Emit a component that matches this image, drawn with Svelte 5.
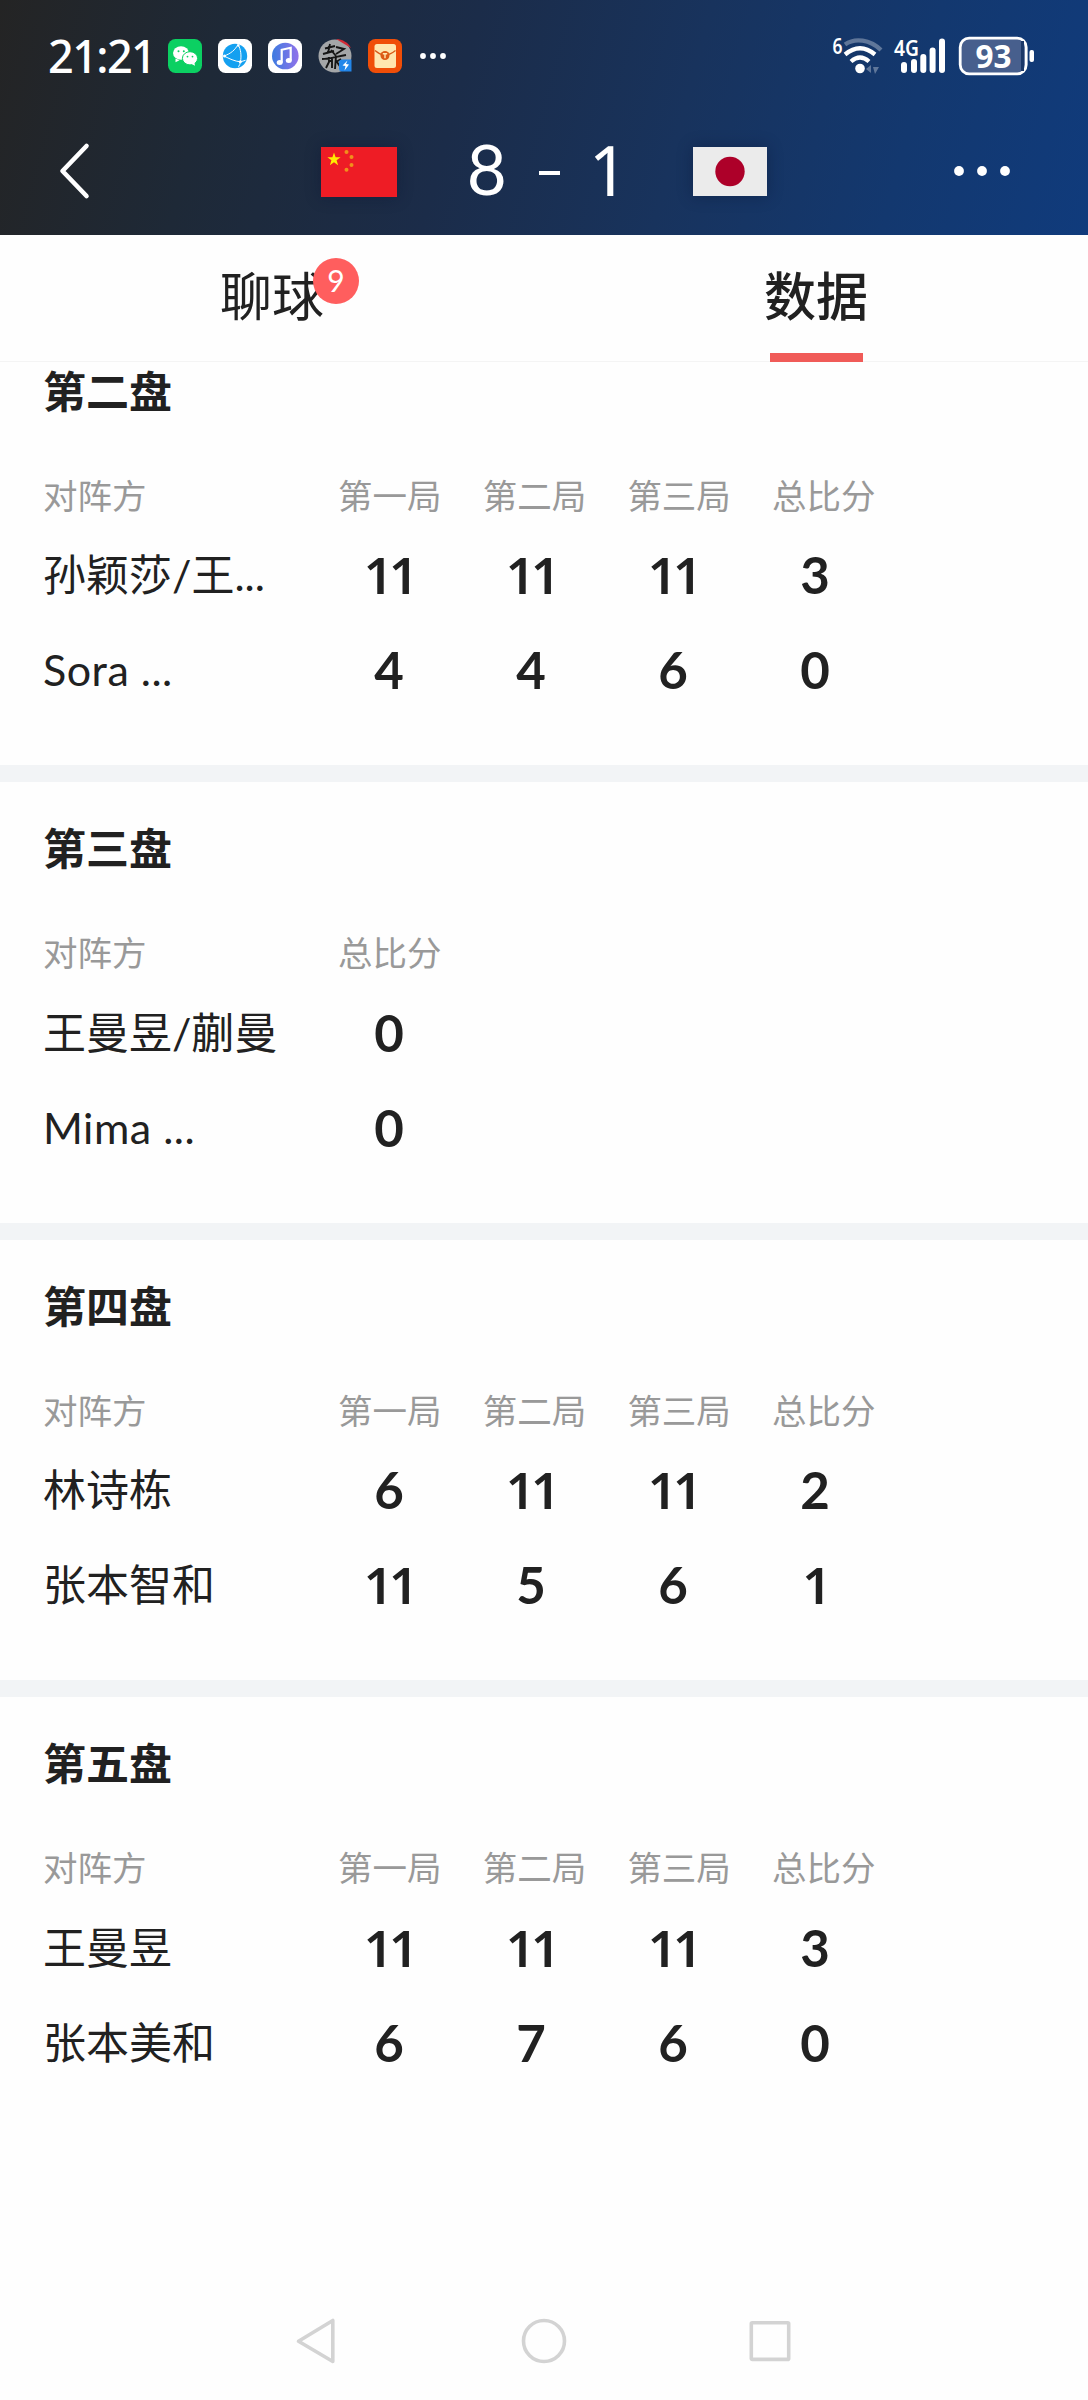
<script>
  const games = ['第一局', '第二局', '第三局', '总比分'];
  const matches = [
    { title: '第二盘', heads: games, rows: [
      { name: '孙颖莎/王...', scores: [11, 11, 11, 3] },
      { name: 'Sora ...', scores: [4, 4, 6, 0] } ] },
    { title: '第三盘', heads: ['总比分'], rows: [
      { name: '王曼昱/蒯曼', scores: [0] },
      { name: 'Mima ...', scores: [0] } ] },
    { title: '第四盘', heads: games, rows: [
      { name: '林诗栋', scores: [6, 11, 11, 2] },
      { name: '张本智和', scores: [11, 5, 6, 1] } ] },
    { title: '第五盘', heads: games, rows: [
      { name: '王曼昱', scores: [11, 11, 11, 3] },
      { name: '张本美和', scores: [6, 7, 6, 0] } ] }
  ];
  const isOnes = (n) => /^1+$/.test(String(n));
  const isLatin = (s) => /^[A-Za-z]/.test(s);
</script>

<div class="screen">
  <header>
    <div class="status">
      <span class="time">21:21</span>
      <div class="apps">
        <svg width="34" height="34" viewBox="0 0 34 34">
          <rect width="34" height="34" rx="7.5" fill="#0bd062" />
          <path d="M7.5 19.500 7.500 23.300l4-2z" fill="#fff" />
          <ellipse cx="13" cy="14" rx="8" ry="6.800" fill="#fff" />
          <ellipse cx="22" cy="19.300" rx="7.600" ry="6.600" fill="#fff" stroke="#0bd062" stroke-width="1" />
          <path d="m23.500 25 3.500 1.700-.6-3.500z" fill="#fff" />
          <g fill="#0bd062"><circle cx="10.500" cy="12.300" r="1" /><circle cx="15.800" cy="12.300" r="1" /><circle cx="19.500" cy="17.600" r=".9" /><circle cx="24.500" cy="17.600" r=".9" /></g>
        </svg>
        <svg width="34" height="34" viewBox="0 0 34 34">
          <rect width="34" height="34" rx="7.500" fill="#fff" />
          <circle cx="17" cy="17" r="12.200" fill="#14a0f0" />
          <path d="M6 17C13 14.500 17 11 20 5.500M6 17c5 2.500 11 5.500 16.500 5.800M20 5.500c3 5 3.500 11 2.500 17.300-.3 2-1 3.500-2 5M22.500 22.800l5-1.500" fill="none" stroke="#fff" stroke-width="1" />
          <circle cx="6.500" cy="17" r="1.500" fill="#fff" /><circle cx="22.300" cy="22.800" r="1.500" fill="#fff" /><circle cx="20.300" cy="6.500" r="1.200" fill="#fff" />
        </svg>
        <svg width="34" height="34" viewBox="0 0 34 34">
          <defs><linearGradient id="music" x1="0" y1="0" x2="1" y2="0"><stop offset="0" stop-color="#3d7be0" /><stop offset="1" stop-color="#9072ea" /></linearGradient></defs>
          <rect width="34" height="34" rx="7.500" fill="#fff" />
          <circle cx="17.300" cy="17" r="13.300" fill="url(#music)" />
          <path d="M13.700 23.500V10.800l9-2v12.700" fill="none" stroke="#fff" stroke-width="2.200" />
          <ellipse cx="11.700" cy="23.500" rx="3" ry="2.500" fill="#fff" /><ellipse cx="20.800" cy="21.500" rx="3" ry="2.500" fill="#fff" />
        </svg>
        <svg width="34" height="34" viewBox="0 0 34 34">
          <circle cx="17" cy="17" r="16.500" fill="#a4a6a8" />
          <path d="M18 0c7 .5 12 3.500 15 9z" fill="#d42a35" />
          <path d="M7 9.500 17 7M12 5l-2 9M5 15l11-3M18 8l8 2-8 5M4 20c8 0 16-3 24-4M11 18v5l-3 6M14 18v11M11 22h3M18 17l-1 13M18 23l5-3M19 23l4 6M13 11l5 6" fill="none" stroke="#151515" stroke-width="1.900" />
          <path d="M21 23.500q0-3 3-3h9.500v12H24q-3 0-3-3z" fill="#2286ea" />
          <path d="m29.500 21.500-5 5 3 .5-1 4.500 4.500-6-3-.5z" fill="#fff" />
        </svg>
        <svg width="34" height="34" viewBox="0 0 34 34">
          <rect width="34" height="34" rx="7.500" fill="#f04e08" />
          <rect x="6.500" y="5" width="21.500" height="24" rx="2.500" fill="#ffe7b0" />
          <path d="M7 11.500c4 3.500 6 4.500 10 5 4-.5 6-1.500 10.500-5" fill="none" stroke="#d85a18" stroke-width="1.300" />
          <circle cx="17" cy="16.500" r="4.500" fill="#dc5a16" />
          <path d="M14.800 14.700h4.400M17 14.700v4.500" stroke="#ffe7b0" stroke-width="1.400" />
        </svg>
        <svg class="more" width="28" height="34" viewBox="0 0 28 34" fill="#fff"><circle cx="4" cy="17" r="2.900" /><circle cx="14" cy="17" r="2.900" /><circle cx="24" cy="17" r="2.900" /></svg>
      </div>
      <svg class="signals" width="210" height="72" viewBox="830 20 210 72">
        <text class="tiny" x="832.500" y="54" textLength="10" lengthAdjust="spacingAndGlyphs" font-size="21">6</text>
        <g fill="none" stroke="#fff" stroke-width="4.300">
          <path d="M845 44.500c10-7 25-5 36 5.500" opacity=".32" />
          <path d="M845 54.500q15-12.500 30 0" />
          <path d="M851 61.500q9-8 18 0" />
        </g>
        <circle cx="860" cy="68.500" r="4.800" fill="#fff" />
        <path d="m866 69 5-4v8zm7-2h6l-4 7zM872 65v7" fill="#fff" opacity=".32" />
        <text class="tiny" x="894" y="56" textLength="25" lengthAdjust="spacingAndGlyphs" font-size="22">4G</text>
        <g fill="#fff">
          <rect x="901" y="62" width="6" height="11" rx="3" /><rect x="911" y="59" width="6" height="14" rx="3" />
          <rect x="920.300" y="54" width="6" height="19" rx="3" /><rect x="929.600" y="47.500" width="6" height="25.500" rx="3" />
          <rect x="939" y="38.500" width="6" height="34.500" rx="3" />
        </g>
        <rect x="960.200" y="38.200" width="66" height="35.600" rx="9" fill="#475f8d" stroke="#fff" stroke-width="2.800" />
        <rect x="1021" y="41" width="3" height="30" fill="#1b3868" />
        <rect x="1029.500" y="50" width="4.500" height="12" rx="2" fill="#fff" />
        <text class="level" x="993.500" y="68" text-anchor="middle" textLength="36" lengthAdjust="spacingAndGlyphs">93</text>
      </svg>
    </div>
    <div class="scorebar">
      <svg class="back" width="34" height="60" viewBox="0 0 34 60"><path d="M29.500 5 5.500 30l24 25" fill="none" stroke="#fff" stroke-width="4.600" stroke-linecap="round" stroke-linejoin="round" /></svg>
      <div class="versus">
        <svg class="flag" width="76" height="50" viewBox="0 0 76 50">
          <rect width="76" height="50" fill="#ee1c25" />
          <path d="m13 5.500 1.600 4.800h5l-4 3 1.500 4.900-4.100-3-4.100 3 1.500-4.900-4-3h5z" fill="#ffec00" />
          <g fill="#f0901c"><circle cx="25.500" cy="5" r="2" /><circle cx="30.500" cy="10" r="2" /><circle cx="30.500" cy="18" r="2" /><circle cx="25.500" cy="22.800" r="2" /></g>
        </svg>
        <div class="score"><span>8</span><i></i><span class="away">1</span></div>
        <svg class="flag" width="74" height="49" viewBox="0 0 74 49"><rect width="74" height="49" fill="#ebebeb" /><circle cx="37" cy="24.500" r="14.700" fill="#ad0029" /></svg>
      </div>
      <svg class="menu" width="60" height="20" viewBox="0 0 60 20" fill="#fff"><circle cx="7" cy="10" r="4.900" /><circle cx="30" cy="10" r="4.900" /><circle cx="53" cy="10" r="4.900" /></svg>
    </div>
  </header>

  <nav class="tabs">
    <div class="tab"><span class="label">聊球<b class="badge">9</b></span></div>
    <div class="tab active"><span class="label">数据</span></div>
  </nav>

  <main>
    {#each matches as m}
      <section>
        <h2>{m.title}</h2>
        <div class="heads"><span class="side">对阵方</span>{#each m.heads as h}<span class="head">{h}</span>{/each}</div>
        {#each m.rows as r}
          <div class="row"><span class="name" class:latin={isLatin(r.name)}>{r.name}</span>{#each r.scores as s}<span class="num" class:ones={isOnes(s)}>{s}</span>{/each}</div>
        {/each}
      </section>
    {/each}
  </main>

  <footer>
    <svg width="48" height="50" viewBox="0 0 48 50"><path d="M38.800 4.500v41L4.500 25.300z" /></svg>
    <svg width="48" height="50" viewBox="0 0 48 50"><circle cx="24" cy="25" r="20.500" /></svg>
    <svg width="48" height="50" viewBox="0 0 48 50"><rect x="5.300" y="6.800" width="37.400" height="36.600" rx="1" /></svg>
  </footer>
</div>

<style>
  :global(body) { background: #fefefe; }
  .screen {
    width: 1088px; height: 2400px; display: flex; flex-direction: column;
    font-family: Lato, "Noto Sans CJK SC", sans-serif; color: #212121; overflow: hidden;
  }
  svg { display: block; flex: none; }
  header {
    height: 235px; flex: none; color: #fff;
    background: linear-gradient(105deg, #242424 0%, #1e2937 20%, #1b2c49 42%, #18335d 62%, #13386f 82%, #103b7c 100%);
  }
  .status { height: 72px; padding: 20px 48px 0; display: flex; align-items: center; }
  .time { width: 120px; font: 500 45px/72px "Noto Sans", sans-serif; letter-spacing: -1.600px; white-space: nowrap; }
  .apps { display: flex; gap: 16px; }
  .more { margin-left: 1px; }
  .signals { margin-left: auto; }
  .tiny { font-family: "Noto Sans", sans-serif; font-weight: 600; fill: #fff; }
  .level { font-family: "Noto Sans", sans-serif; font-weight: 700; font-size: 33px; fill: #fff; }
  .scorebar { height: 143px; box-sizing: border-box; display: flex; align-items: center; justify-content: space-between; padding: 14px 76px 0 57px; }
  .versus { display: flex; align-items: center; width: 446px; margin-left: 45px; justify-content: space-between; padding-top: 2px; }
  .flag { box-shadow: 0 0 14px rgba(10, 20, 50, .4); }
  .score { display: flex; align-items: center; font: 400 69px/80px Lato, sans-serif; margin-top: -6px; }
  .score i { width: 21px; height: 4px; background: #fff; margin: 9px 29px 0 32px; }
  .score .away { font-family: "Noto Sans", sans-serif; margin-right: -5px; }
  .tabs { height: 126px; flex: none; display: flex; border-bottom: 1px solid #f4f4f4; background: #fefefe; z-index: 1; }
  .tab { flex: 1; display: flex; flex-direction: column; align-items: center; justify-content: space-between; }
  .label { position: relative; font-size: 52px; line-height: 80px; padding-top: 21px; }
  .active .label { font-weight: 500; }
  .active::after { content: ""; width: 93px; height: 9px; background: #f05b58; margin-bottom: -1px; }
  .badge {
    position: absolute; left: 93px; top: 23px; width: 46px; height: 46px; border-radius: 50%;
    background: #ff5e5e; color: #fff; font-size: 30px; font-weight: 400; line-height: 45px; text-align: center;
  }
  main { flex: 1; overflow: hidden; }
  section { height: 457.5px; box-sizing: border-box; padding: 37px 43px 0; border-bottom: 17.500px solid #f2f4f6; }
  section:first-child { margin-top: -37.500px; }
  section:last-child { border-color: transparent; }
  h2 { margin: 0; font-size: 43px; line-height: 60px; font-weight: 700; }
  .heads { display: flex; margin: 44px 0 1.500px; height: 60px; color: #999; font-size: 34.500px; line-height: 60px; }
  .side { width: 295px; }
  .head { width: 144.700px; }
  .row { display: flex; height: 95.400px; line-height: 95px; }
  .name { width: 275px; font-size: 43px; white-space: nowrap; }
  .latin { letter-spacing: .5px; }
  .num { width: 142px; text-align: center; font-size: 51px; font-weight: 700; }
  .ones { font-family: "Noto Sans", sans-serif; font-weight: 600; letter-spacing: -3.800px; }
  footer { height: 118px; flex: none; display: flex; justify-content: center; gap: 178px; align-items: center; }
  footer svg { fill: none; stroke: #d3d3d3; stroke-width: 3.600; stroke-linejoin: round; }
</style>
